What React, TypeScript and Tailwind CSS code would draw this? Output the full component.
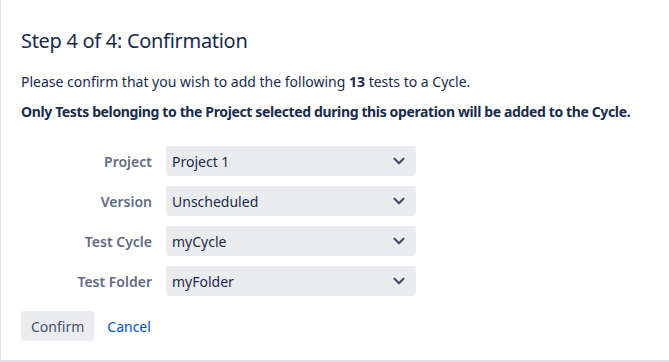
import { ChevronDown } from 'lucide-react';

const fields = [
  { label: 'Project', value: 'Project 1' },
  { label: 'Version', value: 'Unscheduled' },
  { label: 'Test Cycle', value: 'myCycle' },
  { label: 'Test Folder', value: 'myFolder' },
];

export default function App() {
  return (
    <div
      className="w-[669px] h-[362px] bg-white text-[#172b4d] border-l border-b-2 border-[#dfe1e6] box-border"
      style={{ fontFamily: '"Noto Sans", "Liberation Sans", sans-serif' }}
    >
      <div className="pl-[20px] pt-[29px]">
        <h2 className="text-[20px] leading-[24px] font-normal tracking-[-0.3px]">Step 4 of 4: Confirmation</h2>

        <p className="mt-[19px] text-[14px] leading-[20px]">
          Please confirm that you wish to add the following <b className="font-bold">13</b> tests to a Cycle.
        </p>
        <p className="mt-[10px] text-[14px] leading-[20px] font-bold tracking-[-0.37px]">
          Only Tests belonging to the Project selected during this operation will be added to the Cycle.
        </p>

        {/* select fields */}
        <div className="mt-[24px] flex flex-col gap-[10px]">
          {fields.map((f) => (
            <div key={f.label} className="flex items-center">
              <label className="w-[145px] pr-[14px] text-right text-[14px] font-semibold text-[#5e6c84]">
                {f.label}
              </label>
              <div className="w-[250px] h-[30px] rounded-[3px] bg-[#ebecf0] flex items-center justify-between pl-[6px] pr-[8px]">
                <span className="text-[14px] text-[#172b4d]">{f.value}</span>
                <ChevronDown className="w-[18px] h-[18px] text-[#42526e]" strokeWidth={3} />
              </div>
            </div>
          ))}
        </div>

        <div className="mt-[15px] flex items-center gap-[4px]">
          <button className="h-[30px] px-[10px] rounded-[3px] bg-[#ebecf0] text-[14px] text-[#42526e]">Confirm</button>
          <button className="h-[30px] px-[9px] text-[14px] text-[#0052cc]">Cancel</button>
        </div>
      </div>
    </div>
  );
}
